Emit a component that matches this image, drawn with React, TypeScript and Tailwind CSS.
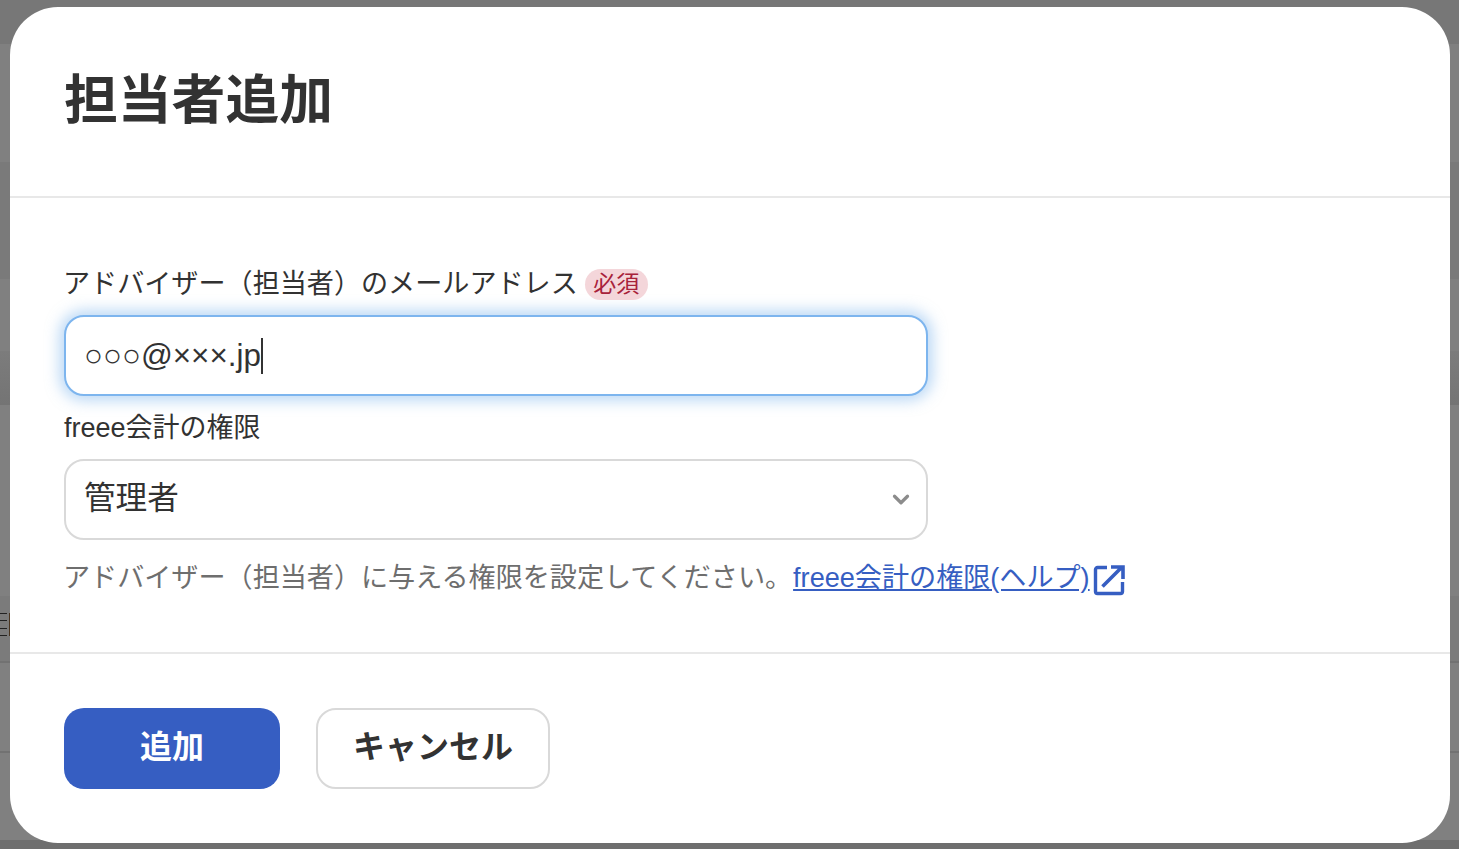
import { ChevronDown } from 'lucide-react'

const font = { fontFamily: '"Liberation Sans", "Noto Sans CJK JP", sans-serif' }

function Backdrop() {
  return (
    <div className="flex h-full flex-col bg-[#808080]">
      <div className="h-[44px] bg-[#777777]" />
      <div className="h-[118px] bg-[#808080]" />
      <div className="h-[117px] bg-[#7a7a7a]" />
      <div className="h-[72px] bg-[#808080]" />
      <div className="h-[54px] bg-gradient-to-b from-[#7c7c7c] to-[#747474]" />
      <div className="h-[191px] bg-[#808080]" />
      <div className="h-[65px] bg-[#7b7b7b] pt-[17px]">
        <div className="flex h-[23px] items-stretch">
          <div className="flex w-[7px] flex-col justify-between">
            <div className="h-px bg-[#222222]" />
            <div className="h-px bg-[#222222]" />
            <div className="h-px bg-[#222222]" />
            <div className="h-px bg-[#222222]" />
          </div>
          <div className="ml-[2px] w-px bg-[#4a3520]" />
        </div>
      </div>
      <div className="h-[90px] border-t-2 border-[#727272] bg-[#808080]" />
      <div className="h-[89px] border-t-2 border-[#727272] bg-[#808080]" />
      <div className="flex-1 bg-[#6e6e6e]" />
    </div>
  )
}

function ExternalIcon() {
  return (
    <svg width="32" height="32" viewBox="0 0 32 32" fill="none" className="ml-[3px] shrink-0 translate-y-[2px]">
      <path
        d="M14 3.5H4.5a2 2 0 0 0-2 2v22a2 2 0 0 0 2 2h23a2 2 0 0 0 2-2V18"
        stroke="#365ec2"
        strokeWidth="3.4"
      />
      <path d="M9.5 22.5 28 4M18 3h12v12" stroke="#365ec2" strokeWidth="3.6" />
    </svg>
  )
}

export default function App() {
  return (
    <div className="relative h-[849px] w-full overflow-hidden" style={font}>
      <Backdrop />
      <div className="absolute left-[10px] top-[7px] flex h-[836px] w-[1440px] flex-col rounded-[48px] bg-white text-[#323232]">
        <div className="h-[191px] border-b-2 border-[#e8e8e8] pl-[54px] pt-[60px]">
          <h1 className="text-[53.8px] font-bold leading-[66px]">担当者追加</h1>
        </div>

        <div className="h-[456px] border-b-2 border-[#e8e8e8] pl-[54px] pt-[70px]">
          <div className="flex h-[32px] items-center text-[27.1px] leading-[32px]">
            <span className="-ml-px">アドバイザー（担当者）のメールアドレス</span>
            <span className="ml-[7px] flex h-[31px] w-[63px] items-center justify-center rounded-full bg-[#f4d6da] text-[23px] text-[#a8223a]">
              必須
            </span>
          </div>

          <div className="mt-[15px] flex h-[81px] w-[864px] items-center rounded-[20px] border-2 border-[#7db5ee] bg-white pl-[18px] text-[31.4px] shadow-[0_0_14px_5px_rgba(125,181,238,0.5)]">
            <span>○○○@×××.jp</span>
            <span className="h-[36px] w-[2px] bg-[#323232]" />
          </div>

          <div className="mt-[16px] h-[32px] text-[27px] leading-[32px]">freee会計の権限</div>

          <div className="mt-[15px] flex h-[81px] w-[864px] items-center justify-between rounded-[20px] border-2 border-[#d9d9d9] pb-[1px] pl-[18px] pr-[12px] text-[31.6px]">
            <span>管理者</span>
            <ChevronDown size={26} strokeWidth={3} color="#8c8c8c" className="translate-y-[0.5px]" />
          </div>

          <div className="mt-[20px] flex h-[36px] items-center text-[27.1px]">
            <span className="-ml-px mr-px text-[#6e6e6e]">アドバイザー（担当者）に与える権限を設定してください。</span>
            <a className="text-[#365ec2] underline" href="#">
              freee会計の権限(ヘルプ)
            </a>
            <ExternalIcon />
          </div>
        </div>

        <div className="flex gap-[36px] pl-[54px] pt-[54px]">
          <button className="h-[81px] w-[216px] rounded-[20px] bg-[#365ec2] pb-[4px] text-[32px] font-bold text-white">
            追加
          </button>
          <button className="h-[81px] w-[234px] rounded-[20px] border-2 border-[#d9d9d9] bg-white pb-[4px] text-[32px] font-bold text-[#323232]">
            キャンセル
          </button>
        </div>
      </div>
    </div>
  )
}
